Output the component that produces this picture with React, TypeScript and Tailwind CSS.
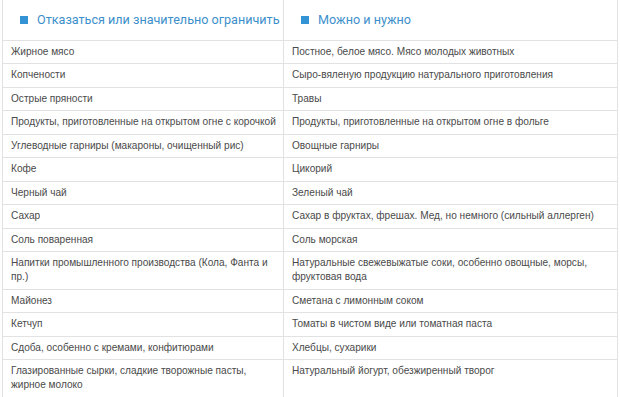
import React from 'react';

const ROWS: [React.ReactNode, React.ReactNode][] = [
  ['Жирное мясо', 'Постное, белое мясо. Мясо молодых животных'],
  ['Копчености', 'Сыро-вяленую продукцию натурального приготовления'],
  ['Острые пряности', 'Травы'],
  ['Продукты, приготовленные на открытом огне с корочкой', 'Продукты, приготовленные на открытом огне в фольге'],
  ['Углеводные гарниры (макароны, очищенный рис)', 'Овощные гарниры'],
  ['Кофе', 'Цикорий'],
  ['Черный чай', 'Зеленый чай'],
  ['Сахар', 'Сахар в фруктах, фрешах. Мед, но немного (сильный аллерген)'],
  ['Соль поваренная', 'Соль морская'],
  [
    <>Напитки промышленного производства (Кола, Фанта и<br />пр.)</>,
    <>Натуральные свежевыжатые соки, особенно овощные, морсы,<br />фруктовая вода</>,
  ],
  ['Майонез', 'Сметана с лимонным соком'],
  ['Кетчуп', 'Томаты в чистом виде или томатная паста'],
  ['Сдоба, особенно с кремами, конфитюрами', 'Хлебцы, сухарики'],
  [
    <>Глазированные сырки, сладкие творожные пасты,<br />жирное молоко</>,
    <>Натуральный йогурт, обезжиренный творог<br />&nbsp;</>,
  ],
];

const HeadCell = ({ title, last }: { title: string; last?: boolean }) => (
  <th
    className={`h-[40px] pl-[17px] text-left align-middle font-normal border-b border-[#e2e2e2] ${
      last ? '' : 'border-r'
    }`}
  >
    <span className="flex items-center gap-[9px] whitespace-nowrap text-[12.6px] text-[#3d8fcc] [font-family:Roboto,sans-serif]">
      <span className="inline-block shrink-0 w-[8px] h-[8px] bg-[#3493d4]" />
      {title}
    </span>
  </th>
);

export default function App() {
  return (
    <div className="w-[620px] h-[397px] overflow-hidden bg-white">
      <table className="ml-[2px] w-[616px] table-fixed border-collapse border-x border-[#e2e2e2] text-[10.1px] leading-[14px] text-[#4a4a4a] [font-family:'Liberation_Sans',Arial,sans-serif]">
        <colgroup>
          <col className="w-[281px]" />
          <col />
        </colgroup>
        <thead>
          <tr>
            <HeadCell title="Отказаться или значительно ограничить" />
            <HeadCell title="Можно и нужно" last />
          </tr>
        </thead>
        <tbody>
          {ROWS.map(([a, b], i) => (
            <tr key={i} className="border-b border-[#e2e2e2]">
              <td className="px-[8px] py-[4.25px] align-top whitespace-nowrap border-r border-[#e2e2e2]">{a}</td>
              <td className="px-[8px] py-[4.25px] align-top whitespace-nowrap">{b}</td>
            </tr>
          ))}
        </tbody>
      </table>
    </div>
  );
}
